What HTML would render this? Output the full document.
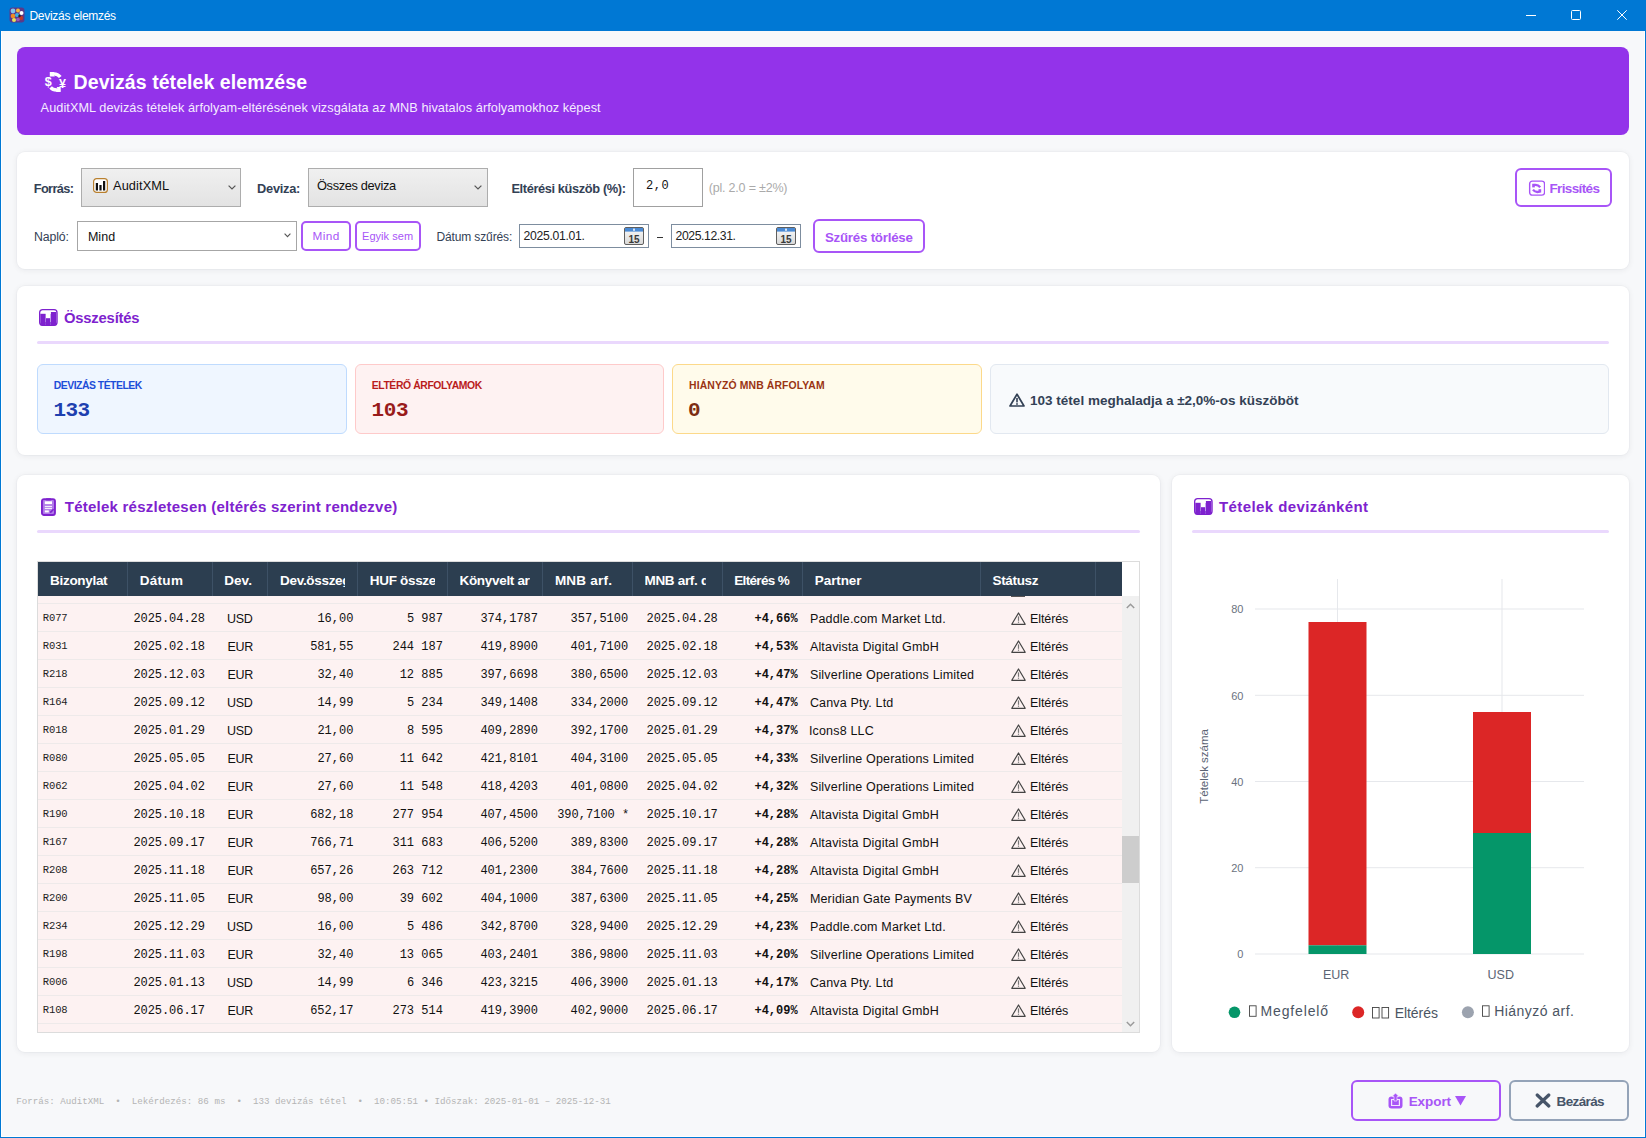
<!DOCTYPE html>
<html><head><meta charset="utf-8"><style>
*{margin:0;padding:0;box-sizing:border-box}
html,body{width:1646px;height:1138px;overflow:hidden;background:#fff;font-family:"Liberation Sans",sans-serif}
.a{position:absolute;white-space:nowrap}
.t{position:absolute;white-space:nowrap;line-height:1}
.card{background:#fff;border-radius:8px;box-shadow:0 0 0 1px rgba(15,23,42,.02),0 1px 6px rgba(15,23,42,.07)}
.pb{border:2px solid #a855f7;border-radius:5px;background:#fff}
</style></head><body>
<div class="a" style="left:0;top:0;width:1646px;height:1138px;background:#0078d4"></div>
<div class="a" style="left:1px;top:31px;width:1644px;height:1106px;background:#f7f8fa;border:1px solid #fff;border-top:none"></div>
<svg class="a" style="left:9px;top:7px" width="16" height="16" viewBox="0 0 16 16">
<rect x="0.5" y="0.5" width="15" height="15" rx="3" fill="#5a3a8a"/>
<circle cx="4" cy="4" r="2.4" fill="#7fc4f0"/><circle cx="9" cy="3.5" r="2" fill="#f5b83c"/><circle cx="12.5" cy="6" r="2" fill="#fff"/>
<circle cx="4" cy="9" r="2.3" fill="#f08a24"/><circle cx="8" cy="8" r="2" fill="#3ab0e6"/><circle cx="12" cy="11" r="2.2" fill="#c0392b"/>
<circle cx="5" cy="13" r="2" fill="#e8e05a"/><circle cx="9" cy="12.5" r="1.8" fill="#9b59b6"/><circle cx="10.5" cy="9" r="1.2" fill="#222"/>
</svg>
<div class="a" style="left:1526px;top:15px;width:10px;height:1px;background:#fff"></div>
<div class="a" style="left:1571px;top:10px;width:10px;height:10px;border:1px solid #fff;border-radius:1.5px"></div>
<svg class="a" style="left:1617px;top:10px" width="10" height="10"><path d="M0.3 0.3L9.7 9.7M9.7 0.3L0.3 9.7" stroke="#fff" stroke-width="1"/></svg>
<div class="a" style="left:17px;top:47px;width:1612px;height:88px;background:#9333ea;border-radius:8px"></div>
<svg class="a" style="left:40px;top:68px" width="32" height="28" viewBox="40 68 32 28">
<path d="M50.5 74.3Q57 72.6 60.3 77" fill="none" stroke="#fff" stroke-width="3.3"/>
<path d="M49.8 71.9H54.6L53.2 73.6L54.8 76.6H49.8Z" fill="#fff"/>
<path d="M50.6 87.4Q53.5 91 60 89.6" fill="none" stroke="#fff" stroke-width="3.3"/>
<path d="M60.7 86.9H56.6L57.6 88.8L56 91.9H60.7Z" fill="#fff"/>
<text x="48.3" y="86.4" font-family="Liberation Sans" font-weight="bold" font-size="12.5" text-anchor="middle" fill="#fff">$</text>
<text x="62.4" y="87.6" font-family="Liberation Sans" font-weight="bold" font-size="12.5" text-anchor="middle" fill="#fff">¥</text>
</svg>
<div class="a card" style="left:17px;top:152px;width:1612px;height:117px"></div>
<div class="a" style="left:81px;top:168px;width:160px;height:39px;border:1px solid #adadad;background:linear-gradient(#f0f0f0,#e3e3e3)"></div>
<svg class="a" style="left:93px;top:178px" width="15" height="15" viewBox="0 0 15 15"><rect x="0.6" y="0.6" width="13.8" height="13.8" rx="3" fill="#fff" stroke="#b9802f" stroke-width="1.2"/><rect x="2.8" y="5" width="2.2" height="7.5" fill="#111"/><rect x="6.4" y="7" width="2.2" height="5.5" fill="#111"/><rect x="10" y="3" width="2.2" height="9.5" fill="#111"/></svg>
<svg class="a" style="left:228px;top:185px" width="8" height="5"><path d="M0.6 0.6L4 4L7.4 0.6" fill="none" stroke="#555" stroke-width="1.2"/></svg>
<div class="a" style="left:308px;top:168px;width:180px;height:39px;border:1px solid #adadad;background:linear-gradient(#f0f0f0,#e3e3e3)"></div>
<svg class="a" style="left:474px;top:185px" width="8" height="5"><path d="M0.6 0.6L4 4L7.4 0.6" fill="none" stroke="#555" stroke-width="1.2"/></svg>
<div class="a" style="left:633px;top:168px;width:70px;height:39px;border:1px solid #a0a0a0;background:#fff"></div>
<div class="a pb" style="left:1515px;top:168px;width:97px;height:39px;border-radius:6px"></div>
<svg class="a" style="left:1528px;top:180px" width="17" height="16" viewBox="0 0 17 16"><rect x="1.65" y="1.15" width="14.9" height="14" rx="2.6" fill="#fff" stroke="#a855f7" stroke-width="1.4"/><path d="M5.2 5.2Q9.5 3.8 12.2 7.2" fill="none" stroke="#a855f7" stroke-width="2.3"/><rect x="4.2" y="3.8" width="2.6" height="3.6" fill="#a855f7"/><path d="M5 9.6Q7.5 13 11.5 11.6" fill="none" stroke="#a855f7" stroke-width="2.3"/><rect x="10.5" y="9.2" width="2.7" height="3.4" fill="#a855f7"/></svg>
<div class="a" style="left:77px;top:221px;width:220px;height:30px;border:1px solid #a6a6a6;background:#fff"></div>
<svg class="a" style="left:284px;top:233px" width="7" height="5"><path d="M0.6 0.6L3.5 3.6L6.4 0.6" fill="none" stroke="#555" stroke-width="1.1"/></svg>
<div class="a pb" style="left:301px;top:221px;width:50px;height:30px"></div>
<div class="a pb" style="left:355px;top:221px;width:66px;height:30px"></div>
<div class="a" style="left:519px;top:224px;width:130px;height:24px;border:1px solid #7d8d9f;background:#fff"></div>
<div class="a" style="left:657px;top:237px;width:6px;height:1px;background:#333"></div>
<div class="a" style="left:671px;top:224px;width:130px;height:24px;border:1px solid #7d8d9f;background:#fff"></div>
<svg class="a" style="left:624px;top:227px" width="20" height="18" viewBox="0 0 20 18"><defs><linearGradient id="cg1" x1="0" y1="0" x2="0" y2="1"><stop offset="0" stop-color="#fafafa"/><stop offset="1" stop-color="#d8d8d8"/></linearGradient></defs><rect x="0.5" y="0.5" width="19" height="17" rx="1.5" fill="url(#cg1)" stroke="#5f5f5f"/><rect x="1" y="1" width="18" height="3.6" fill="#4a8ad4"/><rect x="9.2" y="1.6" width="1.6" height="2.2" fill="#fff"/><text x="10" y="15.6" font-family="Liberation Sans" font-size="10" font-weight="bold" text-anchor="middle" fill="#3a3a3a">15</text></svg>
<svg class="a" style="left:776px;top:227px" width="20" height="18" viewBox="0 0 20 18"><defs><linearGradient id="cg2" x1="0" y1="0" x2="0" y2="1"><stop offset="0" stop-color="#fafafa"/><stop offset="1" stop-color="#d8d8d8"/></linearGradient></defs><rect x="0.5" y="0.5" width="19" height="17" rx="1.5" fill="url(#cg2)" stroke="#5f5f5f"/><rect x="1" y="1" width="18" height="3.6" fill="#4a8ad4"/><rect x="9.2" y="1.6" width="1.6" height="2.2" fill="#fff"/><text x="10" y="15.6" font-family="Liberation Sans" font-size="10" font-weight="bold" text-anchor="middle" fill="#3a3a3a">15</text></svg>
<div class="a pb" style="left:813px;top:219px;width:112px;height:34px;border-radius:6px"></div>
<div class="a card" style="left:17px;top:286px;width:1612px;height:169px"></div>
<svg class="a" style="left:39.3px;top:309px" width="19" height="17" viewBox="0 0 19 17"><rect x="0.65" y="0.65" width="17.4" height="15.7" rx="3" fill="#fff" stroke="#7e22ce" stroke-width="1.3"/><rect x="1.5" y="13" width="15.7" height="3.3" rx="1.5" fill="#7e22ce"/><rect x="1.3" y="4.8" width="5.3" height="11.4" fill="#7e22ce"/><rect x="7" y="9.2" width="4.2" height="7" fill="#7e22ce"/><rect x="11.9" y="3" width="5.5" height="13.2" fill="#7e22ce"/><rect x="6.6" y="5" width="0.4" height="11" fill="#a070e0"/><rect x="11.3" y="5" width="0.5" height="11" fill="#a070e0"/></svg>
<div class="a" style="left:37px;top:341px;width:1572px;height:3px;border-radius:2px;background:#ead8fd"></div>
<div class="a" style="left:37px;top:364px;width:310px;height:70px;border-radius:6px;background:#eff6ff;border:1px solid #bfdbfe"></div>
<div class="a" style="left:355px;top:364px;width:309px;height:70px;border-radius:6px;background:#fef2f2;border:1px solid #fecaca"></div>
<div class="a" style="left:672px;top:364px;width:310px;height:70px;border-radius:6px;background:#fffbeb;border:1px solid #fcd98a"></div>
<div class="a" style="left:990px;top:364px;width:619px;height:70px;border-radius:6px;background:#f8fafc;border:1px solid #e2e8f0"></div>
<svg class="a" style="left:1009px;top:393px" width="16" height="14" viewBox="0 0 16 14"><path d="M8 1.2L15 13H1Z" fill="none" stroke="#334155" stroke-width="1.7" stroke-linejoin="round"/><rect x="7.2" y="5" width="1.6" height="4.4" fill="#334155"/><rect x="7.2" y="10.2" width="1.6" height="1.6" fill="#334155"/></svg>
<div class="a card" style="left:17px;top:475px;width:1143px;height:577px"></div>
<svg class="a" style="left:41px;top:497.6px" width="15" height="18" viewBox="0 0 15 18"><rect x="0.95" y="1.1" width="13" height="15.9" rx="2" fill="#b07ae8" stroke="#7e22ce" stroke-width="1.9"/><rect x="4.8" y="0.2" width="5.4" height="2.4" rx="1" fill="#7e22ce"/><rect x="3.8" y="3.3" width="7.2" height="2.8" fill="#fff"/><rect x="3.8" y="7.9" width="7.2" height="1.3" fill="#fff" opacity="0.85"/><rect x="3.8" y="10" width="7.2" height="1.1" fill="#fff" opacity="0.85"/><rect x="3.8" y="12.4" width="4" height="2" fill="#fff"/><path d="M9.2 14.6L12.6 11.2" stroke="#7e22ce" stroke-width="1.6"/></svg>
<div class="a" style="left:37px;top:530px;width:1103px;height:3px;border-radius:2px;background:#ead8fd"></div>
<div class="a card" style="left:1172px;top:475px;width:457px;height:577px"></div>
<svg class="a" style="left:1194px;top:498px" width="19" height="17" viewBox="0 0 19 17"><rect x="0.65" y="0.65" width="17.4" height="15.7" rx="3" fill="#fff" stroke="#7e22ce" stroke-width="1.3"/><rect x="1.5" y="13" width="15.7" height="3.3" rx="1.5" fill="#7e22ce"/><rect x="1.3" y="4.8" width="5.3" height="11.4" fill="#7e22ce"/><rect x="7" y="9.2" width="4.2" height="7" fill="#7e22ce"/><rect x="11.9" y="3" width="5.5" height="13.2" fill="#7e22ce"/><rect x="6.6" y="5" width="0.4" height="11" fill="#a070e0"/><rect x="11.3" y="5" width="0.5" height="11" fill="#a070e0"/></svg>
<div class="a" style="left:1192px;top:530px;width:417px;height:3px;border-radius:2px;background:#ead8fd"></div>
<div class="a pb" style="left:1351px;top:1080px;width:150px;height:41px;border-radius:6px;background:#f7f8fa"></div>
<svg class="a" style="left:1388px;top:1093px" width="15" height="16" viewBox="0 0 15 16"><rect x="0.5" y="3.5" width="14" height="12" rx="3" fill="#a855f7"/><rect x="3" y="6" width="9" height="7" fill="#fff" opacity="0.85"/><rect x="4.2" y="7" width="6.6" height="5" fill="#a855f7"/><path d="M7.5 0L11 3.6H9V8H6V3.6H4Z" fill="#a855f7" stroke="#fff" stroke-width="0.6"/></svg>
<svg class="a" style="left:1455px;top:1096px" width="11" height="10"><path d="M0 0H11L5.5 9.5Z" fill="#a855f7"/></svg>
<div class="a" style="left:1509px;top:1080px;width:120px;height:41px;border-radius:6px;border:2px solid #94a3b8;background:#f7f8fa"></div>
<svg class="a" style="left:1535px;top:1093px" width="16" height="15"><path d="M2.2 2L13.8 13M13.8 2L2.2 13" stroke="#475569" stroke-width="3.2" stroke-linecap="round"/></svg>
<div class="a" style="left:37px;top:561px;width:1103px;height:472px;border:1px solid #dcdcdc;background:#fdf2f2"></div>
<div class="a" style="left:38px;top:562px;width:1084px;height:34px;background:#2c3e50"></div>
<div class="a" style="left:127px;top:562px;width:1px;height:34px;background:#3d5166"></div>
<div class="a" style="left:212px;top:562px;width:1px;height:34px;background:#3d5166"></div>
<div class="a" style="left:267px;top:562px;width:1px;height:34px;background:#3d5166"></div>
<div class="a" style="left:357px;top:562px;width:1px;height:34px;background:#3d5166"></div>
<div class="a" style="left:447px;top:562px;width:1px;height:34px;background:#3d5166"></div>
<div class="a" style="left:542px;top:562px;width:1px;height:34px;background:#3d5166"></div>
<div class="a" style="left:632px;top:562px;width:1px;height:34px;background:#3d5166"></div>
<div class="a" style="left:722px;top:562px;width:1px;height:34px;background:#3d5166"></div>
<div class="a" style="left:802px;top:562px;width:1px;height:34px;background:#3d5166"></div>
<div class="a" style="left:980px;top:562px;width:1px;height:34px;background:#3d5166"></div>
<div class="a" style="left:1095px;top:562px;width:1px;height:34px;background:#3d5166"></div>
<div class="a" style="left:1122px;top:562px;width:17px;height:34px;background:#fff"></div>
<div class="a" style="left:1122px;top:596px;width:17px;height:436px;background:#f0f0f0"></div>
<div class="a" style="left:1122px;top:836px;width:17px;height:47px;background:#cdcdcd"></div>
<svg class="a" style="left:1126px;top:602.5px" width="9" height="6"><path d="M0.8 5L4.5 1.3L8.2 5" fill="none" stroke="#9a9a9a" stroke-width="1.5"/></svg>
<svg class="a" style="left:1126px;top:1020.5px" width="9" height="6"><path d="M0.8 1L4.5 4.7L8.2 1" fill="none" stroke="#9a9a9a" stroke-width="1.5"/></svg>
<div class="a" style="left:38px;top:603px;width:1084px;height:1px;background:#eeeaea"></div>
<div class="a" style="left:38px;top:631px;width:1084px;height:1px;background:#eeeaea"></div>
<div class="a" style="left:38px;top:659px;width:1084px;height:1px;background:#eeeaea"></div>
<div class="a" style="left:38px;top:687px;width:1084px;height:1px;background:#eeeaea"></div>
<div class="a" style="left:38px;top:715px;width:1084px;height:1px;background:#eeeaea"></div>
<div class="a" style="left:38px;top:743px;width:1084px;height:1px;background:#eeeaea"></div>
<div class="a" style="left:38px;top:771px;width:1084px;height:1px;background:#eeeaea"></div>
<div class="a" style="left:38px;top:799px;width:1084px;height:1px;background:#eeeaea"></div>
<div class="a" style="left:38px;top:827px;width:1084px;height:1px;background:#eeeaea"></div>
<div class="a" style="left:38px;top:855px;width:1084px;height:1px;background:#eeeaea"></div>
<div class="a" style="left:38px;top:883px;width:1084px;height:1px;background:#eeeaea"></div>
<div class="a" style="left:38px;top:911px;width:1084px;height:1px;background:#eeeaea"></div>
<div class="a" style="left:38px;top:939px;width:1084px;height:1px;background:#eeeaea"></div>
<div class="a" style="left:38px;top:967px;width:1084px;height:1px;background:#eeeaea"></div>
<div class="a" style="left:38px;top:995px;width:1084px;height:1px;background:#eeeaea"></div>
<div class="a" style="left:38px;top:1023px;width:1084px;height:1px;background:#eeeaea"></div>
<div class="a" style="left:1011px;top:596px;width:14px;height:1.3px;background:#5a5555"></div>
<svg class="a" style="left:1011px;top:612px" width="15" height="13" viewBox="0 0 15 13"><path d="M7.5 1L14.2 12.3H0.8Z" fill="none" stroke="#444" stroke-width="1.2" stroke-linejoin="round"/><rect x="6.9" y="4.4" width="1.2" height="4.4" fill="#777"/><rect x="6.9" y="9.6" width="1.2" height="1.2" fill="#777"/></svg>
<svg class="a" style="left:1011px;top:640px" width="15" height="13" viewBox="0 0 15 13"><path d="M7.5 1L14.2 12.3H0.8Z" fill="none" stroke="#444" stroke-width="1.2" stroke-linejoin="round"/><rect x="6.9" y="4.4" width="1.2" height="4.4" fill="#777"/><rect x="6.9" y="9.6" width="1.2" height="1.2" fill="#777"/></svg>
<svg class="a" style="left:1011px;top:668px" width="15" height="13" viewBox="0 0 15 13"><path d="M7.5 1L14.2 12.3H0.8Z" fill="none" stroke="#444" stroke-width="1.2" stroke-linejoin="round"/><rect x="6.9" y="4.4" width="1.2" height="4.4" fill="#777"/><rect x="6.9" y="9.6" width="1.2" height="1.2" fill="#777"/></svg>
<svg class="a" style="left:1011px;top:696px" width="15" height="13" viewBox="0 0 15 13"><path d="M7.5 1L14.2 12.3H0.8Z" fill="none" stroke="#444" stroke-width="1.2" stroke-linejoin="round"/><rect x="6.9" y="4.4" width="1.2" height="4.4" fill="#777"/><rect x="6.9" y="9.6" width="1.2" height="1.2" fill="#777"/></svg>
<svg class="a" style="left:1011px;top:724px" width="15" height="13" viewBox="0 0 15 13"><path d="M7.5 1L14.2 12.3H0.8Z" fill="none" stroke="#444" stroke-width="1.2" stroke-linejoin="round"/><rect x="6.9" y="4.4" width="1.2" height="4.4" fill="#777"/><rect x="6.9" y="9.6" width="1.2" height="1.2" fill="#777"/></svg>
<svg class="a" style="left:1011px;top:752px" width="15" height="13" viewBox="0 0 15 13"><path d="M7.5 1L14.2 12.3H0.8Z" fill="none" stroke="#444" stroke-width="1.2" stroke-linejoin="round"/><rect x="6.9" y="4.4" width="1.2" height="4.4" fill="#777"/><rect x="6.9" y="9.6" width="1.2" height="1.2" fill="#777"/></svg>
<svg class="a" style="left:1011px;top:780px" width="15" height="13" viewBox="0 0 15 13"><path d="M7.5 1L14.2 12.3H0.8Z" fill="none" stroke="#444" stroke-width="1.2" stroke-linejoin="round"/><rect x="6.9" y="4.4" width="1.2" height="4.4" fill="#777"/><rect x="6.9" y="9.6" width="1.2" height="1.2" fill="#777"/></svg>
<svg class="a" style="left:1011px;top:808px" width="15" height="13" viewBox="0 0 15 13"><path d="M7.5 1L14.2 12.3H0.8Z" fill="none" stroke="#444" stroke-width="1.2" stroke-linejoin="round"/><rect x="6.9" y="4.4" width="1.2" height="4.4" fill="#777"/><rect x="6.9" y="9.6" width="1.2" height="1.2" fill="#777"/></svg>
<svg class="a" style="left:1011px;top:836px" width="15" height="13" viewBox="0 0 15 13"><path d="M7.5 1L14.2 12.3H0.8Z" fill="none" stroke="#444" stroke-width="1.2" stroke-linejoin="round"/><rect x="6.9" y="4.4" width="1.2" height="4.4" fill="#777"/><rect x="6.9" y="9.6" width="1.2" height="1.2" fill="#777"/></svg>
<svg class="a" style="left:1011px;top:864px" width="15" height="13" viewBox="0 0 15 13"><path d="M7.5 1L14.2 12.3H0.8Z" fill="none" stroke="#444" stroke-width="1.2" stroke-linejoin="round"/><rect x="6.9" y="4.4" width="1.2" height="4.4" fill="#777"/><rect x="6.9" y="9.6" width="1.2" height="1.2" fill="#777"/></svg>
<svg class="a" style="left:1011px;top:892px" width="15" height="13" viewBox="0 0 15 13"><path d="M7.5 1L14.2 12.3H0.8Z" fill="none" stroke="#444" stroke-width="1.2" stroke-linejoin="round"/><rect x="6.9" y="4.4" width="1.2" height="4.4" fill="#777"/><rect x="6.9" y="9.6" width="1.2" height="1.2" fill="#777"/></svg>
<svg class="a" style="left:1011px;top:920px" width="15" height="13" viewBox="0 0 15 13"><path d="M7.5 1L14.2 12.3H0.8Z" fill="none" stroke="#444" stroke-width="1.2" stroke-linejoin="round"/><rect x="6.9" y="4.4" width="1.2" height="4.4" fill="#777"/><rect x="6.9" y="9.6" width="1.2" height="1.2" fill="#777"/></svg>
<svg class="a" style="left:1011px;top:948px" width="15" height="13" viewBox="0 0 15 13"><path d="M7.5 1L14.2 12.3H0.8Z" fill="none" stroke="#444" stroke-width="1.2" stroke-linejoin="round"/><rect x="6.9" y="4.4" width="1.2" height="4.4" fill="#777"/><rect x="6.9" y="9.6" width="1.2" height="1.2" fill="#777"/></svg>
<svg class="a" style="left:1011px;top:976px" width="15" height="13" viewBox="0 0 15 13"><path d="M7.5 1L14.2 12.3H0.8Z" fill="none" stroke="#444" stroke-width="1.2" stroke-linejoin="round"/><rect x="6.9" y="4.4" width="1.2" height="4.4" fill="#777"/><rect x="6.9" y="9.6" width="1.2" height="1.2" fill="#777"/></svg>
<svg class="a" style="left:1011px;top:1004px" width="15" height="13" viewBox="0 0 15 13"><path d="M7.5 1L14.2 12.3H0.8Z" fill="none" stroke="#444" stroke-width="1.2" stroke-linejoin="round"/><rect x="6.9" y="4.4" width="1.2" height="4.4" fill="#777"/><rect x="6.9" y="9.6" width="1.2" height="1.2" fill="#777"/></svg>
<svg class="a" style="left:1180px;top:560px" width="440" height="480" viewBox="1180 560 440 480"><rect x="1255" y="608.5" width="329" height="1" fill="#e6e8ec"/><rect x="1255" y="694.8" width="329" height="1" fill="#e6e8ec"/><rect x="1255" y="781.0" width="329" height="1" fill="#e6e8ec"/><rect x="1255" y="867.2" width="329" height="1" fill="#e6e8ec"/><rect x="1255" y="953.5" width="329" height="1" fill="#e6e8ec"/><rect x="1337.0" y="579" width="1" height="375" fill="#e6e8ec"/><rect x="1501.5" y="579" width="1" height="375" fill="#e6e8ec"/><rect x="1308.5" y="622" width="58" height="323.3" fill="#dc2626"/><rect x="1308.5" y="945.3" width="58" height="8.7" fill="#059669"/><rect x="1473" y="712" width="58" height="121" fill="#dc2626"/><rect x="1473" y="833" width="58" height="121" fill="#059669"/><text transform="translate(1208.2 766.4) rotate(-90)" font-family="Liberation Sans" font-size="11.5" text-anchor="middle" fill="#5b6474">Tételek száma</text><circle cx="1234.5" cy="1012.3" r="5.8" fill="#059669"/><circle cx="1358.2" cy="1012.3" r="6" fill="#dc2626"/><circle cx="1467.9" cy="1012.3" r="6" fill="#9ca3af"/><rect x="1249.5" y="1005.8" width="6.6" height="10.5" fill="none" stroke="#444" stroke-width="0.9"/><rect x="1372.5" y="1007.5" width="6.6" height="10.5" fill="none" stroke="#444" stroke-width="0.9"/><rect x="1382.0" y="1007.5" width="6.6" height="10.5" fill="none" stroke="#444" stroke-width="0.9"/><rect x="1482.5" y="1005.8" width="6.6" height="10.5" fill="none" stroke="#444" stroke-width="0.9"/></svg>
<div class="t" id="tb" style="left:29.50px;top:9.91px;font-size:12px;color:#ffffff;letter-spacing:-0.296px;">Devizás elemzés<span class="pr" style="display:inline-block;width:0;height:0"></span></div>
<div class="t" id="bt" style="left:73.60px;top:72.82px;font-size:19.5px;color:#ffffff;font-weight:bold;letter-spacing:0.063px;">Devizás tételek elemzése<span class="pr" style="display:inline-block;width:0;height:0"></span></div>
<div class="t" id="bs" style="left:40.60px;top:101.90px;font-size:12.7px;color:#f5ecff;letter-spacing:0.074px;">AuditXML devizás tételek árfolyam-eltérésének vizsgálata az MNB hivatalos árfolyamokhoz képest<span class="pr" style="display:inline-block;width:0;height:0"></span></div>
<div class="t" id="f1" style="left:33.80px;top:182.91px;font-size:12.8px;color:#334155;font-weight:bold;letter-spacing:-0.660px;">Forrás:<span class="pr" style="display:inline-block;width:0;height:0"></span></div>
<div class="t" id="f1t" style="left:113.00px;top:180.10px;font-size:12.8px;color:#111111;letter-spacing:0.103px;">AuditXML<span class="pr" style="display:inline-block;width:0;height:0"></span></div>
<div class="t" id="f2" style="left:257.10px;top:183.01px;font-size:12.8px;color:#334155;font-weight:bold;letter-spacing:-0.270px;">Deviza:<span class="pr" style="display:inline-block;width:0;height:0"></span></div>
<div class="t" id="f2t" style="left:317.00px;top:179.51px;font-size:12.8px;color:#111111;letter-spacing:-0.345px;">Összes deviza<span class="pr" style="display:inline-block;width:0;height:0"></span></div>
<div class="t" id="f3" style="left:511.40px;top:183.22px;font-size:12.8px;color:#334155;font-weight:bold;letter-spacing:-0.369px;">Eltérési küszöb (%):<span class="pr" style="display:inline-block;width:0;height:0"></span></div>
<div class="t" id="f3t" style="left:646.10px;top:180.22px;font-size:12px;color:#111111;font-family:'Liberation Mono',monospace;letter-spacing:0.450px;">2,0<span class="pr" style="display:inline-block;width:0;height:0"></span></div>
<div class="t" id="f3h" style="left:708.80px;top:182.40px;font-size:12.5px;color:#aaaaaa;letter-spacing:-0.206px;">(pl. 2.0 = ±2%)<span class="pr" style="display:inline-block;width:0;height:0"></span></div>
<div class="t" id="rft" style="left:1549.50px;top:182.21px;font-size:13.5px;color:#a855f7;font-weight:bold;letter-spacing:-0.630px;">Frissítés<span class="pr" style="display:inline-block;width:0;height:0"></span></div>
<div class="t" id="f4" style="left:34.10px;top:231.00px;font-size:12.3px;color:#334155;letter-spacing:-0.144px;">Napló:<span class="pr" style="display:inline-block;width:0;height:0"></span></div>
<div class="t" id="f4t" style="left:87.90px;top:231.00px;font-size:12.5px;color:#111111;letter-spacing:0.060px;">Mind<span class="pr" style="display:inline-block;width:0;height:0"></span></div>
<div class="t" id="b1t" style="left:312.40px;top:231.21px;font-size:11.8px;color:#a855f7;letter-spacing:0.450px;">Mind<span class="pr" style="display:inline-block;width:0;height:0"></span></div>
<div class="t" id="b2t" style="left:362.00px;top:231.20px;font-size:11px;color:#a855f7;letter-spacing:0.045px;">Egyik sem<span class="pr" style="display:inline-block;width:0;height:0"></span></div>
<div class="t" id="f5" style="left:436.40px;top:231.01px;font-size:12px;color:#334155;letter-spacing:-0.120px;">Dátum szűrés:<span class="pr" style="display:inline-block;width:0;height:0"></span></div>
<div class="t" id="d1t" style="left:523.60px;top:230.22px;font-size:12.2px;color:#222222;letter-spacing:-0.306px;">2025.01.01.<span class="pr" style="display:inline-block;width:0;height:0"></span></div>
<div class="t" id="d2t" style="left:675.50px;top:230.01px;font-size:12.2px;color:#222222;letter-spacing:-0.396px;">2025.12.31.<span class="pr" style="display:inline-block;width:0;height:0"></span></div>
<div class="t" id="clt" style="left:824.90px;top:230.60px;font-size:13.3px;color:#a855f7;font-weight:bold;letter-spacing:-0.222px;">Szűrés törlése<span class="pr" style="display:inline-block;width:0;height:0"></span></div>
<div class="t" id="sumt" style="left:63.90px;top:311.01px;font-size:14.8px;color:#7e22ce;font-weight:bold;letter-spacing:-0.180px;">Összesítés<span class="pr" style="display:inline-block;width:0;height:0"></span></div>
<div class="t" id="s1t" style="left:53.80px;top:381.01px;font-size:10.4px;color:#1d4ed8;font-weight:bold;letter-spacing:-0.489px;">DEVIZÁS TÉTELEK<span class="pr" style="display:inline-block;width:0;height:0"></span></div>
<div class="t" id="s1n" style="left:53.40px;top:400.00px;font-size:21px;color:#1e40af;font-weight:bold;font-family:'Liberation Mono',monospace;letter-spacing:-0.540px;">133<span class="pr" style="display:inline-block;width:0;height:0"></span></div>
<div class="t" id="s2t" style="left:371.70px;top:381.01px;font-size:10.4px;color:#b91c1c;font-weight:bold;letter-spacing:-0.394px;">ELTÉRŐ ÁRFOLYAMOK<span class="pr" style="display:inline-block;width:0;height:0"></span></div>
<div class="t" id="s2n" style="left:371.50px;top:400.00px;font-size:21px;color:#991b1b;font-weight:bold;font-family:'Liberation Mono',monospace;letter-spacing:-0.360px;">103<span class="pr" style="display:inline-block;width:0;height:0"></span></div>
<div class="t" id="s3t" style="left:689.10px;top:381.01px;font-size:10.4px;color:#9a3412;font-weight:bold;letter-spacing:0.123px;">HIÁNYZÓ MNB ÁRFOLYAM<span class="pr" style="display:inline-block;width:0;height:0"></span></div>
<div class="t" id="s3n" style="left:688.10px;top:400.00px;font-size:21px;color:#7c2d12;font-weight:bold;font-family:'Liberation Mono',monospace;">0<span class="pr" style="display:inline-block;width:0;height:0"></span></div>
<div class="t" id="s4t" style="left:1030.10px;top:394.10px;font-size:13.5px;color:#334155;font-weight:bold;">103 tétel meghaladja a ±2,0%-os küszöböt<span class="pr" style="display:inline-block;width:0;height:0"></span></div>
<div class="t" id="tblt" style="left:64.80px;top:498.91px;font-size:15px;color:#7e22ce;font-weight:bold;letter-spacing:0.236px;">Tételek részletesen (eltérés szerint rendezve)<span class="pr" style="display:inline-block;width:0;height:0"></span></div>
<div class="t" id="cht" style="left:1219.00px;top:499.01px;font-size:15px;color:#7e22ce;font-weight:bold;letter-spacing:0.410px;">Tételek devizánként<span class="pr" style="display:inline-block;width:0;height:0"></span></div>
<div class="t" id="foot" style="left:16.20px;top:1097.01px;font-size:9.2px;color:#b4b4b4;font-family:'Liberation Mono',monospace;letter-spacing:-0.008px;white-space:pre;">Forrás: AuditXML  •  Lekérdezés: 86 ms  •  133 devizás tétel  •  10:05:51 • Időszak: 2025-01-01 – 2025-12-31<span class="pr" style="display:inline-block;width:0;height:0"></span></div>
<div class="t" id="expt" style="left:1408.70px;top:1094.90px;font-size:13.5px;color:#a855f7;font-weight:bold;letter-spacing:-0.072px;">Export<span class="pr" style="display:inline-block;width:0;height:0"></span></div>
<div class="t" id="clst" style="left:1556.60px;top:1094.90px;font-size:13.5px;color:#475569;font-weight:bold;letter-spacing:-0.630px;">Bezárás<span class="pr" style="display:inline-block;width:0;height:0"></span></div>
<div class="t" id="h0" style="left:50.10px;top:573.90px;font-size:13.5px;color:#ffffff;font-weight:bold;letter-spacing:-0.315px;">Bizonylat<span class="pr" style="display:inline-block;width:0;height:0"></span></div>
<div class="t" id="h1" style="left:139.80px;top:573.90px;font-size:13.5px;color:#ffffff;font-weight:bold;letter-spacing:0.270px;">Dátum<span class="pr" style="display:inline-block;width:0;height:0"></span></div>
<div class="t" id="h2" style="left:224.20px;top:573.90px;font-size:13.5px;color:#ffffff;font-weight:bold;letter-spacing:0.060px;">Dev.<span class="pr" style="display:inline-block;width:0;height:0"></span></div>
<div class="t" id="h3" style="left:280.10px;width:65px;overflow:hidden;top:573.90px;font-size:13.5px;color:#ffffff;font-weight:bold;letter-spacing:-0.315px;">Dev.összeg<span class="pr" style="display:inline-block;width:0;height:0"></span></div>
<div class="t" id="h4" style="left:369.80px;width:65px;overflow:hidden;top:573.90px;font-size:13.5px;color:#ffffff;font-weight:bold;letter-spacing:-0.315px;">HUF összeg<span class="pr" style="display:inline-block;width:0;height:0"></span></div>
<div class="t" id="h5" style="left:459.50px;width:70px;overflow:hidden;top:573.90px;font-size:13.5px;color:#ffffff;font-weight:bold;letter-spacing:-0.315px;">Könyvelt arf.<span class="pr" style="display:inline-block;width:0;height:0"></span></div>
<div class="t" id="h6" style="left:554.90px;top:573.90px;font-size:13.5px;color:#ffffff;font-weight:bold;letter-spacing:0.231px;">MNB arf.<span class="pr" style="display:inline-block;width:0;height:0"></span></div>
<div class="t" id="h7" style="left:644.50px;width:61px;overflow:hidden;top:573.90px;font-size:13.5px;color:#ffffff;font-weight:bold;letter-spacing:-0.315px;">MNB arf. dátum<span class="pr" style="display:inline-block;width:0;height:0"></span></div>
<div class="t" id="h8" style="left:734.20px;top:573.90px;font-size:13.5px;color:#ffffff;font-weight:bold;letter-spacing:-0.652px;">Eltérés %<span class="pr" style="display:inline-block;width:0;height:0"></span></div>
<div class="t" id="h9" style="left:814.80px;top:573.90px;font-size:13.5px;color:#ffffff;font-weight:bold;letter-spacing:-0.090px;">Partner<span class="pr" style="display:inline-block;width:0;height:0"></span></div>
<div class="t" id="h10" style="left:992.50px;top:573.90px;font-size:13.5px;color:#ffffff;font-weight:bold;letter-spacing:-0.330px;">Státusz<span class="pr" style="display:inline-block;width:0;height:0"></span></div>
<div class="t" id="r0a" style="left:42.80px;top:613.00px;font-size:10.5px;color:#222;font-family:'Liberation Mono',monospace;letter-spacing:-0.120px;">R077<span class="pr" style="display:inline-block;width:0;height:0"></span></div>
<div class="t" id="r0b" style="left:133.40px;top:613.01px;font-size:12px;color:#111;font-family:'Liberation Mono',monospace;letter-spacing:-0.060px;">2025.04.28<span class="pr" style="display:inline-block;width:0;height:0"></span></div>
<div class="t" id="r0c" style="left:89.70px;width:300px;text-align:center;top:612.50px;font-size:12.5px;color:#111;letter-spacing:-0.270px;">USD<span class="pr" style="display:inline-block;width:0;height:0"></span></div>
<div class="t" id="r0d" style="left:53.40px;width:300px;text-align:right;top:613.01px;font-size:12px;color:#111;font-family:'Liberation Mono',monospace;">16,00<span class="pr" style="display:inline-block;width:0;height:0"></span></div>
<div class="t" id="r0e" style="left:142.90px;width:300px;text-align:right;top:613.01px;font-size:12px;color:#111;font-family:'Liberation Mono',monospace;">5 987<span class="pr" style="display:inline-block;width:0;height:0"></span></div>
<div class="t" id="r0f" style="left:238.00px;width:300px;text-align:right;top:613.01px;font-size:12px;color:#111;font-family:'Liberation Mono',monospace;">374,1787<span class="pr" style="display:inline-block;width:0;height:0"></span></div>
<div class="t" id="r0g" style="left:328.20px;width:300px;text-align:right;top:613.01px;font-size:12px;color:#111;font-family:'Liberation Mono',monospace;">357,5100<span class="pr" style="display:inline-block;width:0;height:0"></span></div>
<div class="t" id="r0h" style="left:646.60px;top:613.01px;font-size:12px;color:#111;font-family:'Liberation Mono',monospace;letter-spacing:-0.100px;">2025.04.28<span class="pr" style="display:inline-block;width:0;height:0"></span></div>
<div class="t" id="r0i" style="left:497.70px;width:300px;text-align:right;top:613.01px;font-size:12px;color:#111;font-weight:bold;font-family:'Liberation Mono',monospace;">+4,66%<span class="pr" style="display:inline-block;width:0;height:0"></span></div>
<div class="t" id="r0j" style="left:809.90px;top:612.50px;font-size:12.5px;color:#111;letter-spacing:0.180px;">Paddle.com Market Ltd.<span class="pr" style="display:inline-block;width:0;height:0"></span></div>
<div class="t" id="r0k" style="left:1030.00px;top:612.50px;font-size:12.5px;color:#111;letter-spacing:-0.090px;">Eltérés<span class="pr" style="display:inline-block;width:0;height:0"></span></div>
<div class="t" id="r1a" style="left:42.80px;top:641.00px;font-size:10.5px;color:#222;font-family:'Liberation Mono',monospace;letter-spacing:-0.120px;">R031<span class="pr" style="display:inline-block;width:0;height:0"></span></div>
<div class="t" id="r1b" style="left:133.40px;top:641.01px;font-size:12px;color:#111;font-family:'Liberation Mono',monospace;letter-spacing:-0.060px;">2025.02.18<span class="pr" style="display:inline-block;width:0;height:0"></span></div>
<div class="t" id="r1c" style="left:90.20px;width:300px;text-align:center;top:640.50px;font-size:12.5px;color:#111;letter-spacing:-0.270px;">EUR<span class="pr" style="display:inline-block;width:0;height:0"></span></div>
<div class="t" id="r1d" style="left:53.40px;width:300px;text-align:right;top:641.01px;font-size:12px;color:#111;font-family:'Liberation Mono',monospace;">581,55<span class="pr" style="display:inline-block;width:0;height:0"></span></div>
<div class="t" id="r1e" style="left:142.90px;width:300px;text-align:right;top:641.01px;font-size:12px;color:#111;font-family:'Liberation Mono',monospace;">244 187<span class="pr" style="display:inline-block;width:0;height:0"></span></div>
<div class="t" id="r1f" style="left:238.00px;width:300px;text-align:right;top:641.01px;font-size:12px;color:#111;font-family:'Liberation Mono',monospace;">419,8900<span class="pr" style="display:inline-block;width:0;height:0"></span></div>
<div class="t" id="r1g" style="left:328.20px;width:300px;text-align:right;top:641.01px;font-size:12px;color:#111;font-family:'Liberation Mono',monospace;">401,7100<span class="pr" style="display:inline-block;width:0;height:0"></span></div>
<div class="t" id="r1h" style="left:646.60px;top:641.01px;font-size:12px;color:#111;font-family:'Liberation Mono',monospace;letter-spacing:-0.100px;">2025.02.18<span class="pr" style="display:inline-block;width:0;height:0"></span></div>
<div class="t" id="r1i" style="left:497.70px;width:300px;text-align:right;top:641.01px;font-size:12px;color:#111;font-weight:bold;font-family:'Liberation Mono',monospace;">+4,53%<span class="pr" style="display:inline-block;width:0;height:0"></span></div>
<div class="t" id="r1j" style="left:809.90px;top:640.50px;font-size:12.5px;color:#111;letter-spacing:0.180px;">Altavista Digital GmbH<span class="pr" style="display:inline-block;width:0;height:0"></span></div>
<div class="t" id="r1k" style="left:1030.00px;top:640.50px;font-size:12.5px;color:#111;letter-spacing:-0.090px;">Eltérés<span class="pr" style="display:inline-block;width:0;height:0"></span></div>
<div class="t" id="r2a" style="left:42.80px;top:669.00px;font-size:10.5px;color:#222;font-family:'Liberation Mono',monospace;letter-spacing:-0.120px;">R218<span class="pr" style="display:inline-block;width:0;height:0"></span></div>
<div class="t" id="r2b" style="left:133.40px;top:669.01px;font-size:12px;color:#111;font-family:'Liberation Mono',monospace;letter-spacing:-0.060px;">2025.12.03<span class="pr" style="display:inline-block;width:0;height:0"></span></div>
<div class="t" id="r2c" style="left:90.20px;width:300px;text-align:center;top:668.50px;font-size:12.5px;color:#111;letter-spacing:-0.270px;">EUR<span class="pr" style="display:inline-block;width:0;height:0"></span></div>
<div class="t" id="r2d" style="left:53.40px;width:300px;text-align:right;top:669.01px;font-size:12px;color:#111;font-family:'Liberation Mono',monospace;">32,40<span class="pr" style="display:inline-block;width:0;height:0"></span></div>
<div class="t" id="r2e" style="left:142.90px;width:300px;text-align:right;top:669.01px;font-size:12px;color:#111;font-family:'Liberation Mono',monospace;">12 885<span class="pr" style="display:inline-block;width:0;height:0"></span></div>
<div class="t" id="r2f" style="left:238.00px;width:300px;text-align:right;top:669.01px;font-size:12px;color:#111;font-family:'Liberation Mono',monospace;">397,6698<span class="pr" style="display:inline-block;width:0;height:0"></span></div>
<div class="t" id="r2g" style="left:328.20px;width:300px;text-align:right;top:669.01px;font-size:12px;color:#111;font-family:'Liberation Mono',monospace;">380,6500<span class="pr" style="display:inline-block;width:0;height:0"></span></div>
<div class="t" id="r2h" style="left:646.60px;top:669.01px;font-size:12px;color:#111;font-family:'Liberation Mono',monospace;letter-spacing:-0.100px;">2025.12.03<span class="pr" style="display:inline-block;width:0;height:0"></span></div>
<div class="t" id="r2i" style="left:497.70px;width:300px;text-align:right;top:669.01px;font-size:12px;color:#111;font-weight:bold;font-family:'Liberation Mono',monospace;">+4,47%<span class="pr" style="display:inline-block;width:0;height:0"></span></div>
<div class="t" id="r2j" style="left:809.90px;top:668.50px;font-size:12.5px;color:#111;letter-spacing:0.180px;">Silverline Operations Limited<span class="pr" style="display:inline-block;width:0;height:0"></span></div>
<div class="t" id="r2k" style="left:1030.00px;top:668.50px;font-size:12.5px;color:#111;letter-spacing:-0.090px;">Eltérés<span class="pr" style="display:inline-block;width:0;height:0"></span></div>
<div class="t" id="r3a" style="left:42.80px;top:697.00px;font-size:10.5px;color:#222;font-family:'Liberation Mono',monospace;letter-spacing:-0.120px;">R164<span class="pr" style="display:inline-block;width:0;height:0"></span></div>
<div class="t" id="r3b" style="left:133.40px;top:697.01px;font-size:12px;color:#111;font-family:'Liberation Mono',monospace;letter-spacing:-0.060px;">2025.09.12<span class="pr" style="display:inline-block;width:0;height:0"></span></div>
<div class="t" id="r3c" style="left:89.70px;width:300px;text-align:center;top:696.50px;font-size:12.5px;color:#111;letter-spacing:-0.270px;">USD<span class="pr" style="display:inline-block;width:0;height:0"></span></div>
<div class="t" id="r3d" style="left:53.40px;width:300px;text-align:right;top:697.01px;font-size:12px;color:#111;font-family:'Liberation Mono',monospace;">14,99<span class="pr" style="display:inline-block;width:0;height:0"></span></div>
<div class="t" id="r3e" style="left:142.90px;width:300px;text-align:right;top:697.01px;font-size:12px;color:#111;font-family:'Liberation Mono',monospace;">5 234<span class="pr" style="display:inline-block;width:0;height:0"></span></div>
<div class="t" id="r3f" style="left:238.00px;width:300px;text-align:right;top:697.01px;font-size:12px;color:#111;font-family:'Liberation Mono',monospace;">349,1408<span class="pr" style="display:inline-block;width:0;height:0"></span></div>
<div class="t" id="r3g" style="left:328.20px;width:300px;text-align:right;top:697.01px;font-size:12px;color:#111;font-family:'Liberation Mono',monospace;">334,2000<span class="pr" style="display:inline-block;width:0;height:0"></span></div>
<div class="t" id="r3h" style="left:646.60px;top:697.01px;font-size:12px;color:#111;font-family:'Liberation Mono',monospace;letter-spacing:-0.100px;">2025.09.12<span class="pr" style="display:inline-block;width:0;height:0"></span></div>
<div class="t" id="r3i" style="left:497.70px;width:300px;text-align:right;top:697.01px;font-size:12px;color:#111;font-weight:bold;font-family:'Liberation Mono',monospace;">+4,47%<span class="pr" style="display:inline-block;width:0;height:0"></span></div>
<div class="t" id="r3j" style="left:809.90px;top:696.50px;font-size:12.5px;color:#111;letter-spacing:0.180px;">Canva Pty. Ltd<span class="pr" style="display:inline-block;width:0;height:0"></span></div>
<div class="t" id="r3k" style="left:1030.00px;top:696.50px;font-size:12.5px;color:#111;letter-spacing:-0.090px;">Eltérés<span class="pr" style="display:inline-block;width:0;height:0"></span></div>
<div class="t" id="r4a" style="left:42.80px;top:725.00px;font-size:10.5px;color:#222;font-family:'Liberation Mono',monospace;letter-spacing:-0.120px;">R018<span class="pr" style="display:inline-block;width:0;height:0"></span></div>
<div class="t" id="r4b" style="left:133.40px;top:725.01px;font-size:12px;color:#111;font-family:'Liberation Mono',monospace;letter-spacing:-0.060px;">2025.01.29<span class="pr" style="display:inline-block;width:0;height:0"></span></div>
<div class="t" id="r4c" style="left:89.70px;width:300px;text-align:center;top:724.50px;font-size:12.5px;color:#111;letter-spacing:-0.270px;">USD<span class="pr" style="display:inline-block;width:0;height:0"></span></div>
<div class="t" id="r4d" style="left:53.40px;width:300px;text-align:right;top:725.01px;font-size:12px;color:#111;font-family:'Liberation Mono',monospace;">21,00<span class="pr" style="display:inline-block;width:0;height:0"></span></div>
<div class="t" id="r4e" style="left:142.90px;width:300px;text-align:right;top:725.01px;font-size:12px;color:#111;font-family:'Liberation Mono',monospace;">8 595<span class="pr" style="display:inline-block;width:0;height:0"></span></div>
<div class="t" id="r4f" style="left:238.00px;width:300px;text-align:right;top:725.01px;font-size:12px;color:#111;font-family:'Liberation Mono',monospace;">409,2890<span class="pr" style="display:inline-block;width:0;height:0"></span></div>
<div class="t" id="r4g" style="left:328.20px;width:300px;text-align:right;top:725.01px;font-size:12px;color:#111;font-family:'Liberation Mono',monospace;">392,1700<span class="pr" style="display:inline-block;width:0;height:0"></span></div>
<div class="t" id="r4h" style="left:646.60px;top:725.01px;font-size:12px;color:#111;font-family:'Liberation Mono',monospace;letter-spacing:-0.100px;">2025.01.29<span class="pr" style="display:inline-block;width:0;height:0"></span></div>
<div class="t" id="r4i" style="left:497.70px;width:300px;text-align:right;top:725.01px;font-size:12px;color:#111;font-weight:bold;font-family:'Liberation Mono',monospace;">+4,37%<span class="pr" style="display:inline-block;width:0;height:0"></span></div>
<div class="t" id="r4j" style="left:808.90px;top:724.50px;font-size:12.5px;color:#111;letter-spacing:0.180px;">Icons8 LLC<span class="pr" style="display:inline-block;width:0;height:0"></span></div>
<div class="t" id="r4k" style="left:1030.00px;top:724.50px;font-size:12.5px;color:#111;letter-spacing:-0.090px;">Eltérés<span class="pr" style="display:inline-block;width:0;height:0"></span></div>
<div class="t" id="r5a" style="left:42.80px;top:753.00px;font-size:10.5px;color:#222;font-family:'Liberation Mono',monospace;letter-spacing:-0.120px;">R080<span class="pr" style="display:inline-block;width:0;height:0"></span></div>
<div class="t" id="r5b" style="left:133.40px;top:753.01px;font-size:12px;color:#111;font-family:'Liberation Mono',monospace;letter-spacing:-0.060px;">2025.05.05<span class="pr" style="display:inline-block;width:0;height:0"></span></div>
<div class="t" id="r5c" style="left:90.20px;width:300px;text-align:center;top:752.50px;font-size:12.5px;color:#111;letter-spacing:-0.270px;">EUR<span class="pr" style="display:inline-block;width:0;height:0"></span></div>
<div class="t" id="r5d" style="left:53.40px;width:300px;text-align:right;top:753.01px;font-size:12px;color:#111;font-family:'Liberation Mono',monospace;">27,60<span class="pr" style="display:inline-block;width:0;height:0"></span></div>
<div class="t" id="r5e" style="left:142.90px;width:300px;text-align:right;top:753.01px;font-size:12px;color:#111;font-family:'Liberation Mono',monospace;">11 642<span class="pr" style="display:inline-block;width:0;height:0"></span></div>
<div class="t" id="r5f" style="left:238.00px;width:300px;text-align:right;top:753.01px;font-size:12px;color:#111;font-family:'Liberation Mono',monospace;">421,8101<span class="pr" style="display:inline-block;width:0;height:0"></span></div>
<div class="t" id="r5g" style="left:328.20px;width:300px;text-align:right;top:753.01px;font-size:12px;color:#111;font-family:'Liberation Mono',monospace;">404,3100<span class="pr" style="display:inline-block;width:0;height:0"></span></div>
<div class="t" id="r5h" style="left:646.60px;top:753.01px;font-size:12px;color:#111;font-family:'Liberation Mono',monospace;letter-spacing:-0.100px;">2025.05.05<span class="pr" style="display:inline-block;width:0;height:0"></span></div>
<div class="t" id="r5i" style="left:497.70px;width:300px;text-align:right;top:753.01px;font-size:12px;color:#111;font-weight:bold;font-family:'Liberation Mono',monospace;">+4,33%<span class="pr" style="display:inline-block;width:0;height:0"></span></div>
<div class="t" id="r5j" style="left:809.90px;top:752.50px;font-size:12.5px;color:#111;letter-spacing:0.180px;">Silverline Operations Limited<span class="pr" style="display:inline-block;width:0;height:0"></span></div>
<div class="t" id="r5k" style="left:1030.00px;top:752.50px;font-size:12.5px;color:#111;letter-spacing:-0.090px;">Eltérés<span class="pr" style="display:inline-block;width:0;height:0"></span></div>
<div class="t" id="r6a" style="left:42.80px;top:781.00px;font-size:10.5px;color:#222;font-family:'Liberation Mono',monospace;letter-spacing:-0.120px;">R062<span class="pr" style="display:inline-block;width:0;height:0"></span></div>
<div class="t" id="r6b" style="left:133.40px;top:781.01px;font-size:12px;color:#111;font-family:'Liberation Mono',monospace;letter-spacing:-0.060px;">2025.04.02<span class="pr" style="display:inline-block;width:0;height:0"></span></div>
<div class="t" id="r6c" style="left:90.20px;width:300px;text-align:center;top:780.50px;font-size:12.5px;color:#111;letter-spacing:-0.270px;">EUR<span class="pr" style="display:inline-block;width:0;height:0"></span></div>
<div class="t" id="r6d" style="left:53.40px;width:300px;text-align:right;top:781.01px;font-size:12px;color:#111;font-family:'Liberation Mono',monospace;">27,60<span class="pr" style="display:inline-block;width:0;height:0"></span></div>
<div class="t" id="r6e" style="left:142.90px;width:300px;text-align:right;top:781.01px;font-size:12px;color:#111;font-family:'Liberation Mono',monospace;">11 548<span class="pr" style="display:inline-block;width:0;height:0"></span></div>
<div class="t" id="r6f" style="left:238.00px;width:300px;text-align:right;top:781.01px;font-size:12px;color:#111;font-family:'Liberation Mono',monospace;">418,4203<span class="pr" style="display:inline-block;width:0;height:0"></span></div>
<div class="t" id="r6g" style="left:328.20px;width:300px;text-align:right;top:781.01px;font-size:12px;color:#111;font-family:'Liberation Mono',monospace;">401,0800<span class="pr" style="display:inline-block;width:0;height:0"></span></div>
<div class="t" id="r6h" style="left:646.60px;top:781.01px;font-size:12px;color:#111;font-family:'Liberation Mono',monospace;letter-spacing:-0.100px;">2025.04.02<span class="pr" style="display:inline-block;width:0;height:0"></span></div>
<div class="t" id="r6i" style="left:497.70px;width:300px;text-align:right;top:781.01px;font-size:12px;color:#111;font-weight:bold;font-family:'Liberation Mono',monospace;">+4,32%<span class="pr" style="display:inline-block;width:0;height:0"></span></div>
<div class="t" id="r6j" style="left:809.90px;top:780.50px;font-size:12.5px;color:#111;letter-spacing:0.180px;">Silverline Operations Limited<span class="pr" style="display:inline-block;width:0;height:0"></span></div>
<div class="t" id="r6k" style="left:1030.00px;top:780.50px;font-size:12.5px;color:#111;letter-spacing:-0.090px;">Eltérés<span class="pr" style="display:inline-block;width:0;height:0"></span></div>
<div class="t" id="r7a" style="left:42.80px;top:809.00px;font-size:10.5px;color:#222;font-family:'Liberation Mono',monospace;letter-spacing:-0.120px;">R190<span class="pr" style="display:inline-block;width:0;height:0"></span></div>
<div class="t" id="r7b" style="left:133.40px;top:809.01px;font-size:12px;color:#111;font-family:'Liberation Mono',monospace;letter-spacing:-0.060px;">2025.10.18<span class="pr" style="display:inline-block;width:0;height:0"></span></div>
<div class="t" id="r7c" style="left:90.20px;width:300px;text-align:center;top:808.50px;font-size:12.5px;color:#111;letter-spacing:-0.270px;">EUR<span class="pr" style="display:inline-block;width:0;height:0"></span></div>
<div class="t" id="r7d" style="left:53.40px;width:300px;text-align:right;top:809.01px;font-size:12px;color:#111;font-family:'Liberation Mono',monospace;">682,18<span class="pr" style="display:inline-block;width:0;height:0"></span></div>
<div class="t" id="r7e" style="left:142.90px;width:300px;text-align:right;top:809.01px;font-size:12px;color:#111;font-family:'Liberation Mono',monospace;">277 954<span class="pr" style="display:inline-block;width:0;height:0"></span></div>
<div class="t" id="r7f" style="left:238.00px;width:300px;text-align:right;top:809.01px;font-size:12px;color:#111;font-family:'Liberation Mono',monospace;">407,4500<span class="pr" style="display:inline-block;width:0;height:0"></span></div>
<div class="t" id="r7g" style="left:329.20px;width:300px;text-align:right;top:809.01px;font-size:12px;color:#111;font-family:'Liberation Mono',monospace;">390,7100 *<span class="pr" style="display:inline-block;width:0;height:0"></span></div>
<div class="t" id="r7h" style="left:646.60px;top:809.01px;font-size:12px;color:#111;font-family:'Liberation Mono',monospace;letter-spacing:-0.100px;">2025.10.17<span class="pr" style="display:inline-block;width:0;height:0"></span></div>
<div class="t" id="r7i" style="left:497.70px;width:300px;text-align:right;top:809.01px;font-size:12px;color:#111;font-weight:bold;font-family:'Liberation Mono',monospace;">+4,28%<span class="pr" style="display:inline-block;width:0;height:0"></span></div>
<div class="t" id="r7j" style="left:809.90px;top:808.50px;font-size:12.5px;color:#111;letter-spacing:0.180px;">Altavista Digital GmbH<span class="pr" style="display:inline-block;width:0;height:0"></span></div>
<div class="t" id="r7k" style="left:1030.00px;top:808.50px;font-size:12.5px;color:#111;letter-spacing:-0.090px;">Eltérés<span class="pr" style="display:inline-block;width:0;height:0"></span></div>
<div class="t" id="r8a" style="left:42.80px;top:837.00px;font-size:10.5px;color:#222;font-family:'Liberation Mono',monospace;letter-spacing:-0.120px;">R167<span class="pr" style="display:inline-block;width:0;height:0"></span></div>
<div class="t" id="r8b" style="left:133.40px;top:837.01px;font-size:12px;color:#111;font-family:'Liberation Mono',monospace;letter-spacing:-0.060px;">2025.09.17<span class="pr" style="display:inline-block;width:0;height:0"></span></div>
<div class="t" id="r8c" style="left:90.20px;width:300px;text-align:center;top:836.50px;font-size:12.5px;color:#111;letter-spacing:-0.270px;">EUR<span class="pr" style="display:inline-block;width:0;height:0"></span></div>
<div class="t" id="r8d" style="left:53.40px;width:300px;text-align:right;top:837.01px;font-size:12px;color:#111;font-family:'Liberation Mono',monospace;">766,71<span class="pr" style="display:inline-block;width:0;height:0"></span></div>
<div class="t" id="r8e" style="left:142.90px;width:300px;text-align:right;top:837.01px;font-size:12px;color:#111;font-family:'Liberation Mono',monospace;">311 683<span class="pr" style="display:inline-block;width:0;height:0"></span></div>
<div class="t" id="r8f" style="left:238.00px;width:300px;text-align:right;top:837.01px;font-size:12px;color:#111;font-family:'Liberation Mono',monospace;">406,5200<span class="pr" style="display:inline-block;width:0;height:0"></span></div>
<div class="t" id="r8g" style="left:328.20px;width:300px;text-align:right;top:837.01px;font-size:12px;color:#111;font-family:'Liberation Mono',monospace;">389,8300<span class="pr" style="display:inline-block;width:0;height:0"></span></div>
<div class="t" id="r8h" style="left:646.60px;top:837.01px;font-size:12px;color:#111;font-family:'Liberation Mono',monospace;letter-spacing:-0.100px;">2025.09.17<span class="pr" style="display:inline-block;width:0;height:0"></span></div>
<div class="t" id="r8i" style="left:497.70px;width:300px;text-align:right;top:837.01px;font-size:12px;color:#111;font-weight:bold;font-family:'Liberation Mono',monospace;">+4,28%<span class="pr" style="display:inline-block;width:0;height:0"></span></div>
<div class="t" id="r8j" style="left:809.90px;top:836.50px;font-size:12.5px;color:#111;letter-spacing:0.180px;">Altavista Digital GmbH<span class="pr" style="display:inline-block;width:0;height:0"></span></div>
<div class="t" id="r8k" style="left:1030.00px;top:836.50px;font-size:12.5px;color:#111;letter-spacing:-0.090px;">Eltérés<span class="pr" style="display:inline-block;width:0;height:0"></span></div>
<div class="t" id="r9a" style="left:42.80px;top:865.00px;font-size:10.5px;color:#222;font-family:'Liberation Mono',monospace;letter-spacing:-0.120px;">R208<span class="pr" style="display:inline-block;width:0;height:0"></span></div>
<div class="t" id="r9b" style="left:133.40px;top:865.01px;font-size:12px;color:#111;font-family:'Liberation Mono',monospace;letter-spacing:-0.060px;">2025.11.18<span class="pr" style="display:inline-block;width:0;height:0"></span></div>
<div class="t" id="r9c" style="left:90.20px;width:300px;text-align:center;top:864.50px;font-size:12.5px;color:#111;letter-spacing:-0.270px;">EUR<span class="pr" style="display:inline-block;width:0;height:0"></span></div>
<div class="t" id="r9d" style="left:53.40px;width:300px;text-align:right;top:865.01px;font-size:12px;color:#111;font-family:'Liberation Mono',monospace;">657,26<span class="pr" style="display:inline-block;width:0;height:0"></span></div>
<div class="t" id="r9e" style="left:142.90px;width:300px;text-align:right;top:865.01px;font-size:12px;color:#111;font-family:'Liberation Mono',monospace;">263 712<span class="pr" style="display:inline-block;width:0;height:0"></span></div>
<div class="t" id="r9f" style="left:238.00px;width:300px;text-align:right;top:865.01px;font-size:12px;color:#111;font-family:'Liberation Mono',monospace;">401,2300<span class="pr" style="display:inline-block;width:0;height:0"></span></div>
<div class="t" id="r9g" style="left:328.20px;width:300px;text-align:right;top:865.01px;font-size:12px;color:#111;font-family:'Liberation Mono',monospace;">384,7600<span class="pr" style="display:inline-block;width:0;height:0"></span></div>
<div class="t" id="r9h" style="left:646.60px;top:865.01px;font-size:12px;color:#111;font-family:'Liberation Mono',monospace;letter-spacing:-0.100px;">2025.11.18<span class="pr" style="display:inline-block;width:0;height:0"></span></div>
<div class="t" id="r9i" style="left:497.70px;width:300px;text-align:right;top:865.01px;font-size:12px;color:#111;font-weight:bold;font-family:'Liberation Mono',monospace;">+4,28%<span class="pr" style="display:inline-block;width:0;height:0"></span></div>
<div class="t" id="r9j" style="left:809.90px;top:864.50px;font-size:12.5px;color:#111;letter-spacing:0.180px;">Altavista Digital GmbH<span class="pr" style="display:inline-block;width:0;height:0"></span></div>
<div class="t" id="r9k" style="left:1030.00px;top:864.50px;font-size:12.5px;color:#111;letter-spacing:-0.090px;">Eltérés<span class="pr" style="display:inline-block;width:0;height:0"></span></div>
<div class="t" id="r10a" style="left:42.80px;top:893.00px;font-size:10.5px;color:#222;font-family:'Liberation Mono',monospace;letter-spacing:-0.120px;">R200<span class="pr" style="display:inline-block;width:0;height:0"></span></div>
<div class="t" id="r10b" style="left:133.40px;top:893.01px;font-size:12px;color:#111;font-family:'Liberation Mono',monospace;letter-spacing:-0.060px;">2025.11.05<span class="pr" style="display:inline-block;width:0;height:0"></span></div>
<div class="t" id="r10c" style="left:90.20px;width:300px;text-align:center;top:892.50px;font-size:12.5px;color:#111;letter-spacing:-0.270px;">EUR<span class="pr" style="display:inline-block;width:0;height:0"></span></div>
<div class="t" id="r10d" style="left:53.40px;width:300px;text-align:right;top:893.01px;font-size:12px;color:#111;font-family:'Liberation Mono',monospace;">98,00<span class="pr" style="display:inline-block;width:0;height:0"></span></div>
<div class="t" id="r10e" style="left:142.90px;width:300px;text-align:right;top:893.01px;font-size:12px;color:#111;font-family:'Liberation Mono',monospace;">39 602<span class="pr" style="display:inline-block;width:0;height:0"></span></div>
<div class="t" id="r10f" style="left:238.00px;width:300px;text-align:right;top:893.01px;font-size:12px;color:#111;font-family:'Liberation Mono',monospace;">404,1000<span class="pr" style="display:inline-block;width:0;height:0"></span></div>
<div class="t" id="r10g" style="left:328.20px;width:300px;text-align:right;top:893.01px;font-size:12px;color:#111;font-family:'Liberation Mono',monospace;">387,6300<span class="pr" style="display:inline-block;width:0;height:0"></span></div>
<div class="t" id="r10h" style="left:646.60px;top:893.01px;font-size:12px;color:#111;font-family:'Liberation Mono',monospace;letter-spacing:-0.100px;">2025.11.05<span class="pr" style="display:inline-block;width:0;height:0"></span></div>
<div class="t" id="r10i" style="left:497.70px;width:300px;text-align:right;top:893.01px;font-size:12px;color:#111;font-weight:bold;font-family:'Liberation Mono',monospace;">+4,25%<span class="pr" style="display:inline-block;width:0;height:0"></span></div>
<div class="t" id="r10j" style="left:809.90px;top:892.50px;font-size:12.5px;color:#111;letter-spacing:0.180px;">Meridian Gate Payments BV<span class="pr" style="display:inline-block;width:0;height:0"></span></div>
<div class="t" id="r10k" style="left:1030.00px;top:892.50px;font-size:12.5px;color:#111;letter-spacing:-0.090px;">Eltérés<span class="pr" style="display:inline-block;width:0;height:0"></span></div>
<div class="t" id="r11a" style="left:42.80px;top:921.00px;font-size:10.5px;color:#222;font-family:'Liberation Mono',monospace;letter-spacing:-0.120px;">R234<span class="pr" style="display:inline-block;width:0;height:0"></span></div>
<div class="t" id="r11b" style="left:133.40px;top:921.01px;font-size:12px;color:#111;font-family:'Liberation Mono',monospace;letter-spacing:-0.060px;">2025.12.29<span class="pr" style="display:inline-block;width:0;height:0"></span></div>
<div class="t" id="r11c" style="left:89.70px;width:300px;text-align:center;top:920.50px;font-size:12.5px;color:#111;letter-spacing:-0.270px;">USD<span class="pr" style="display:inline-block;width:0;height:0"></span></div>
<div class="t" id="r11d" style="left:53.40px;width:300px;text-align:right;top:921.01px;font-size:12px;color:#111;font-family:'Liberation Mono',monospace;">16,00<span class="pr" style="display:inline-block;width:0;height:0"></span></div>
<div class="t" id="r11e" style="left:142.90px;width:300px;text-align:right;top:921.01px;font-size:12px;color:#111;font-family:'Liberation Mono',monospace;">5 486<span class="pr" style="display:inline-block;width:0;height:0"></span></div>
<div class="t" id="r11f" style="left:238.00px;width:300px;text-align:right;top:921.01px;font-size:12px;color:#111;font-family:'Liberation Mono',monospace;">342,8700<span class="pr" style="display:inline-block;width:0;height:0"></span></div>
<div class="t" id="r11g" style="left:328.20px;width:300px;text-align:right;top:921.01px;font-size:12px;color:#111;font-family:'Liberation Mono',monospace;">328,9400<span class="pr" style="display:inline-block;width:0;height:0"></span></div>
<div class="t" id="r11h" style="left:646.60px;top:921.01px;font-size:12px;color:#111;font-family:'Liberation Mono',monospace;letter-spacing:-0.100px;">2025.12.29<span class="pr" style="display:inline-block;width:0;height:0"></span></div>
<div class="t" id="r11i" style="left:497.70px;width:300px;text-align:right;top:921.01px;font-size:12px;color:#111;font-weight:bold;font-family:'Liberation Mono',monospace;">+4,23%<span class="pr" style="display:inline-block;width:0;height:0"></span></div>
<div class="t" id="r11j" style="left:809.90px;top:920.50px;font-size:12.5px;color:#111;letter-spacing:0.180px;">Paddle.com Market Ltd.<span class="pr" style="display:inline-block;width:0;height:0"></span></div>
<div class="t" id="r11k" style="left:1030.00px;top:920.50px;font-size:12.5px;color:#111;letter-spacing:-0.090px;">Eltérés<span class="pr" style="display:inline-block;width:0;height:0"></span></div>
<div class="t" id="r12a" style="left:42.80px;top:949.00px;font-size:10.5px;color:#222;font-family:'Liberation Mono',monospace;letter-spacing:-0.120px;">R198<span class="pr" style="display:inline-block;width:0;height:0"></span></div>
<div class="t" id="r12b" style="left:133.40px;top:949.01px;font-size:12px;color:#111;font-family:'Liberation Mono',monospace;letter-spacing:-0.060px;">2025.11.03<span class="pr" style="display:inline-block;width:0;height:0"></span></div>
<div class="t" id="r12c" style="left:90.20px;width:300px;text-align:center;top:948.50px;font-size:12.5px;color:#111;letter-spacing:-0.270px;">EUR<span class="pr" style="display:inline-block;width:0;height:0"></span></div>
<div class="t" id="r12d" style="left:53.40px;width:300px;text-align:right;top:949.01px;font-size:12px;color:#111;font-family:'Liberation Mono',monospace;">32,40<span class="pr" style="display:inline-block;width:0;height:0"></span></div>
<div class="t" id="r12e" style="left:142.90px;width:300px;text-align:right;top:949.01px;font-size:12px;color:#111;font-family:'Liberation Mono',monospace;">13 065<span class="pr" style="display:inline-block;width:0;height:0"></span></div>
<div class="t" id="r12f" style="left:238.00px;width:300px;text-align:right;top:949.01px;font-size:12px;color:#111;font-family:'Liberation Mono',monospace;">403,2401<span class="pr" style="display:inline-block;width:0;height:0"></span></div>
<div class="t" id="r12g" style="left:328.20px;width:300px;text-align:right;top:949.01px;font-size:12px;color:#111;font-family:'Liberation Mono',monospace;">386,9800<span class="pr" style="display:inline-block;width:0;height:0"></span></div>
<div class="t" id="r12h" style="left:646.60px;top:949.01px;font-size:12px;color:#111;font-family:'Liberation Mono',monospace;letter-spacing:-0.100px;">2025.11.03<span class="pr" style="display:inline-block;width:0;height:0"></span></div>
<div class="t" id="r12i" style="left:497.70px;width:300px;text-align:right;top:949.01px;font-size:12px;color:#111;font-weight:bold;font-family:'Liberation Mono',monospace;">+4,20%<span class="pr" style="display:inline-block;width:0;height:0"></span></div>
<div class="t" id="r12j" style="left:809.90px;top:948.50px;font-size:12.5px;color:#111;letter-spacing:0.180px;">Silverline Operations Limited<span class="pr" style="display:inline-block;width:0;height:0"></span></div>
<div class="t" id="r12k" style="left:1030.00px;top:948.50px;font-size:12.5px;color:#111;letter-spacing:-0.090px;">Eltérés<span class="pr" style="display:inline-block;width:0;height:0"></span></div>
<div class="t" id="r13a" style="left:42.80px;top:977.00px;font-size:10.5px;color:#222;font-family:'Liberation Mono',monospace;letter-spacing:-0.120px;">R006<span class="pr" style="display:inline-block;width:0;height:0"></span></div>
<div class="t" id="r13b" style="left:133.40px;top:977.01px;font-size:12px;color:#111;font-family:'Liberation Mono',monospace;letter-spacing:-0.060px;">2025.01.13<span class="pr" style="display:inline-block;width:0;height:0"></span></div>
<div class="t" id="r13c" style="left:89.70px;width:300px;text-align:center;top:976.50px;font-size:12.5px;color:#111;letter-spacing:-0.270px;">USD<span class="pr" style="display:inline-block;width:0;height:0"></span></div>
<div class="t" id="r13d" style="left:53.40px;width:300px;text-align:right;top:977.01px;font-size:12px;color:#111;font-family:'Liberation Mono',monospace;">14,99<span class="pr" style="display:inline-block;width:0;height:0"></span></div>
<div class="t" id="r13e" style="left:142.90px;width:300px;text-align:right;top:977.01px;font-size:12px;color:#111;font-family:'Liberation Mono',monospace;">6 346<span class="pr" style="display:inline-block;width:0;height:0"></span></div>
<div class="t" id="r13f" style="left:238.00px;width:300px;text-align:right;top:977.01px;font-size:12px;color:#111;font-family:'Liberation Mono',monospace;">423,3215<span class="pr" style="display:inline-block;width:0;height:0"></span></div>
<div class="t" id="r13g" style="left:328.20px;width:300px;text-align:right;top:977.01px;font-size:12px;color:#111;font-family:'Liberation Mono',monospace;">406,3900<span class="pr" style="display:inline-block;width:0;height:0"></span></div>
<div class="t" id="r13h" style="left:646.60px;top:977.01px;font-size:12px;color:#111;font-family:'Liberation Mono',monospace;letter-spacing:-0.100px;">2025.01.13<span class="pr" style="display:inline-block;width:0;height:0"></span></div>
<div class="t" id="r13i" style="left:497.70px;width:300px;text-align:right;top:977.01px;font-size:12px;color:#111;font-weight:bold;font-family:'Liberation Mono',monospace;">+4,17%<span class="pr" style="display:inline-block;width:0;height:0"></span></div>
<div class="t" id="r13j" style="left:809.90px;top:976.50px;font-size:12.5px;color:#111;letter-spacing:0.180px;">Canva Pty. Ltd<span class="pr" style="display:inline-block;width:0;height:0"></span></div>
<div class="t" id="r13k" style="left:1030.00px;top:976.50px;font-size:12.5px;color:#111;letter-spacing:-0.090px;">Eltérés<span class="pr" style="display:inline-block;width:0;height:0"></span></div>
<div class="t" id="r14a" style="left:42.80px;top:1005.00px;font-size:10.5px;color:#222;font-family:'Liberation Mono',monospace;letter-spacing:-0.120px;">R108<span class="pr" style="display:inline-block;width:0;height:0"></span></div>
<div class="t" id="r14b" style="left:133.40px;top:1005.01px;font-size:12px;color:#111;font-family:'Liberation Mono',monospace;letter-spacing:-0.060px;">2025.06.17<span class="pr" style="display:inline-block;width:0;height:0"></span></div>
<div class="t" id="r14c" style="left:90.20px;width:300px;text-align:center;top:1004.50px;font-size:12.5px;color:#111;letter-spacing:-0.270px;">EUR<span class="pr" style="display:inline-block;width:0;height:0"></span></div>
<div class="t" id="r14d" style="left:53.40px;width:300px;text-align:right;top:1005.01px;font-size:12px;color:#111;font-family:'Liberation Mono',monospace;">652,17<span class="pr" style="display:inline-block;width:0;height:0"></span></div>
<div class="t" id="r14e" style="left:142.90px;width:300px;text-align:right;top:1005.01px;font-size:12px;color:#111;font-family:'Liberation Mono',monospace;">273 514<span class="pr" style="display:inline-block;width:0;height:0"></span></div>
<div class="t" id="r14f" style="left:238.00px;width:300px;text-align:right;top:1005.01px;font-size:12px;color:#111;font-family:'Liberation Mono',monospace;">419,3900<span class="pr" style="display:inline-block;width:0;height:0"></span></div>
<div class="t" id="r14g" style="left:328.20px;width:300px;text-align:right;top:1005.01px;font-size:12px;color:#111;font-family:'Liberation Mono',monospace;">402,9000<span class="pr" style="display:inline-block;width:0;height:0"></span></div>
<div class="t" id="r14h" style="left:646.60px;top:1005.01px;font-size:12px;color:#111;font-family:'Liberation Mono',monospace;letter-spacing:-0.100px;">2025.06.17<span class="pr" style="display:inline-block;width:0;height:0"></span></div>
<div class="t" id="r14i" style="left:497.70px;width:300px;text-align:right;top:1005.01px;font-size:12px;color:#111;font-weight:bold;font-family:'Liberation Mono',monospace;">+4,09%<span class="pr" style="display:inline-block;width:0;height:0"></span></div>
<div class="t" id="r14j" style="left:809.90px;top:1004.50px;font-size:12.5px;color:#111;letter-spacing:0.180px;">Altavista Digital GmbH<span class="pr" style="display:inline-block;width:0;height:0"></span></div>
<div class="t" id="r14k" style="left:1030.00px;top:1004.50px;font-size:12.5px;color:#111;letter-spacing:-0.090px;">Eltérés<span class="pr" style="display:inline-block;width:0;height:0"></span></div>
<div class="t" id="y80" style="left:943.40px;width:300px;text-align:right;top:604.20px;font-size:11px;color:#6b7280;">80<span class="pr" style="display:inline-block;width:0;height:0"></span></div>
<div class="t" id="y60" style="left:943.40px;width:300px;text-align:right;top:690.51px;font-size:11px;color:#6b7280;">60<span class="pr" style="display:inline-block;width:0;height:0"></span></div>
<div class="t" id="y40" style="left:943.40px;width:300px;text-align:right;top:776.70px;font-size:11px;color:#6b7280;">40<span class="pr" style="display:inline-block;width:0;height:0"></span></div>
<div class="t" id="y20" style="left:943.40px;width:300px;text-align:right;top:862.91px;font-size:11px;color:#6b7280;">20<span class="pr" style="display:inline-block;width:0;height:0"></span></div>
<div class="t" id="y0" style="left:943.40px;width:300px;text-align:right;top:949.20px;font-size:11px;color:#6b7280;">0<span class="pr" style="display:inline-block;width:0;height:0"></span></div>
<div class="t" id="xeur" style="left:1186.15px;width:300px;text-align:center;top:968.81px;font-size:12.5px;color:#5b6474;letter-spacing:0.000px;">EUR<span class="pr" style="display:inline-block;width:0;height:0"></span></div>
<div class="t" id="xusd" style="left:1350.75px;width:300px;text-align:center;top:968.81px;font-size:12.5px;color:#5b6474;letter-spacing:0.000px;">USD<span class="pr" style="display:inline-block;width:0;height:0"></span></div>
<div class="t" id="lg1" style="left:1260.50px;top:1004.22px;font-size:14px;color:#4b5563;letter-spacing:0.855px;">Megfelelő<span class="pr" style="display:inline-block;width:0;height:0"></span></div>
<div class="t" id="lg2" style="left:1394.70px;top:1006.31px;font-size:14px;color:#4b5563;letter-spacing:-0.060px;">Eltérés<span class="pr" style="display:inline-block;width:0;height:0"></span></div>
<div class="t" id="lg3" style="left:1494.20px;top:1004.22px;font-size:14px;color:#4b5563;letter-spacing:0.458px;">Hiányzó arf.<span class="pr" style="display:inline-block;width:0;height:0"></span></div>
</body></html>
